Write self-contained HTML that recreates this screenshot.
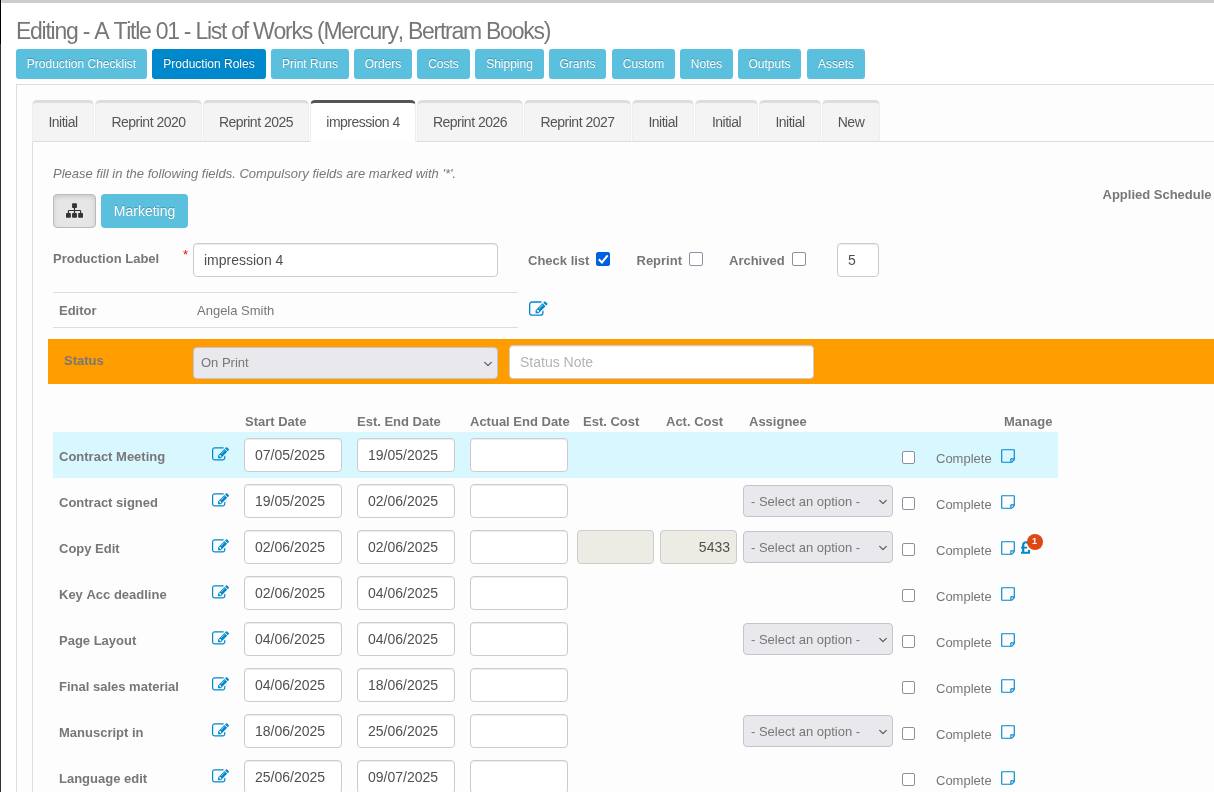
<!DOCTYPE html><html lang="en"><head><meta charset="utf-8"><title>Editing - A Title 01</title><style>*{box-sizing:border-box;margin:0;padding:0}
html,body{width:1214px;height:792px;overflow:hidden;background:#fff}
body{will-change:transform;font-kerning:none;position:relative;font-family:"Liberation Sans",Arial,sans-serif;font-size:13px;color:#777;line-height:1}
#topbar{position:absolute;left:0;top:0;width:1214px;height:3px;background:#ccc}
#leftbar{position:absolute;left:0;top:0;width:1px;height:792px;background:linear-gradient(#000,#000 44px,#2f333d 44px,#2f333d)}#leftbar2{position:absolute;left:1px;top:0;width:1px;height:3px;background:#dcdcdc}
#title{position:absolute;left:16px;top:17px;font-size:23px;font-weight:400;letter-spacing:-1.26px;color:#777;white-space:nowrap;line-height:28px}
.btn{position:absolute;top:49px;height:30px;background:#5bc0de;color:#fff;border-radius:3px;font-size:12px;line-height:30px;text-align:center;text-shadow:0 -1px 0 rgba(0,0,0,.25);white-space:nowrap;}
.btn.act{background:#0088cc}
#panel{position:absolute;left:16px;top:84px;width:1210px;height:720px;border:1px solid #ddd;background:#fdfdfd}
#tabcontent{position:absolute;left:32px;top:141px;width:1200px;height:700px;border:1px solid #ddd;background:#fdfdfd}
.tab{position:absolute;top:100px;height:42px;background:#f4f4f4;border:1px solid #eee;border-top:3px solid #ddd;border-bottom:1px solid #ddd;border-radius:5px 5px 0 0;font-size:14px;letter-spacing:-0.5px;color:#555;text-align:center;line-height:39px;white-space:nowrap}
.tab.act{background:#fff;border-top-color:#555;border-bottom-color:#fff;border-left-color:#eee;border-right-color:#eee}
#hint{position:absolute;left:53px;top:166px;font-style:italic;font-size:13px;color:#777;white-space:nowrap;line-height:15px}
#sitebtn{position:absolute;left:53px;top:194px;width:43px;height:34px;border:1px solid #bbb;border-radius:4px;background:#e6e6e6;box-shadow:inset 0 2px 4px rgba(0,0,0,.12)}
#sitebtn svg{position:absolute;left:12px;top:7px}
#mkt{position:absolute;left:101px;top:194px;width:87px;height:34px;background:#5bc0de;border-radius:4px;color:#fff;font-size:14px;line-height:34px;text-align:center;text-shadow:0 -1px 0 rgba(0,0,0,.25)}
.lbl{position:absolute;font-weight:700;font-size:13px;color:#777;white-space:nowrap;line-height:16px}
.val{position:absolute;font-size:13px;color:#777;white-space:nowrap;line-height:16px}
#applied{left:1102.5px;top:187px}
#req{position:absolute;left:183px;top:248px;color:#f00;font-size:13px}
.inp{position:absolute;height:34px;border:1px solid #ccc;border-radius:4px;background:#fff;font-size:14px;color:#505050;line-height:32px;white-space:nowrap;box-shadow:inset 0 1px 1px rgba(0,0,0,.075)}
.inp.ph{color:#b4b4b4}
.inp.d{top:6px;width:98px;padding-left:10px}
.inp.dis{background:#ecece5;box-shadow:none}
.cb{position:absolute;width:14px;height:14px;border:1px solid #8f8f9d;border-radius:2px;background:#fff}
.cb.s{width:13px;height:13px}
.cb.on{background:#0060df;border-color:#0060df}
.cb.on svg{position:absolute;left:-1px;top:-1px}
#edrow{position:absolute;left:53px;top:292px;width:465px;height:36px;border-top:1px solid #ddd;border-bottom:1px solid #ddd}
#status{position:absolute;left:48px;top:339px;width:1180px;height:45px;background:#ff9c00}
.sel{position:absolute;height:32px;border:1px solid #c4c4cc;border-radius:4px;background:#e9e9ed;color:#777;font-size:13px;line-height:32px;padding-left:7px;white-space:nowrap}
.sel .chev{position:absolute;right:3px;top:10px}
.th{top:414px}
.row{position:absolute;left:53px;width:1005px;height:46px}
.row.hl{background:#d9f7ff}
.badge{position:absolute;left:973.5px;top:10px;width:16px;height:16px;border-radius:8px;background:#dd4814;color:#fff;font-size:9px;font-weight:700;line-height:14px;text-align:center}
</style></head><body>
<div id="topbar"></div><div id="leftbar"></div><div id="leftbar2"></div>
<h2 id="title">Editing - A Title 01 - List of Works (Mercury, Bertram Books)</h2>
<a class="btn" style="left:16px;width:131px">Production Checklist</a>
<a class="btn act" style="left:152px;width:114px">Production Roles</a>
<a class="btn" style="left:271px;width:78px">Print Runs</a>
<a class="btn" style="left:354px;width:58px">Orders</a>
<a class="btn" style="left:417px;width:53px">Costs</a>
<a class="btn" style="left:475px;width:69px">Shipping</a>
<a class="btn" style="left:549px;width:57px">Grants</a>
<a class="btn" style="left:612px;width:63px">Custom</a>
<a class="btn" style="left:680px;width:53px">Notes</a>
<a class="btn" style="left:738px;width:63px">Outputs</a>
<a class="btn" style="left:807px;width:58px">Assets</a>
<div id="panel"></div>
<div id="tabcontent"></div>
<div class="tab" style="left:32px;width:62px">Initial</div>
<div class="tab" style="left:95px;width:107px">Reprint 2020</div>
<div class="tab" style="left:203px;width:106px">Reprint 2025</div>
<div class="tab act" style="left:310px;width:106px">impression 4</div>
<div class="tab" style="left:417px;width:106px">Reprint 2026</div>
<div class="tab" style="left:524px;width:107px">Reprint 2027</div>
<div class="tab" style="left:632px;width:62px">Initial</div>
<div class="tab" style="left:695px;width:63px">Initial</div>
<div class="tab" style="left:759px;width:62px">Initial</div>
<div class="tab" style="left:822px;width:58px">New</div>
<p id="hint">Please fill in the following fields. Compulsory fields are marked with '*'.</p>
<div id="sitebtn"><svg viewBox="0 0 1792 1792" width="17" height="17"><path fill="#333" d="M1792 1248v320q0 40-28 68t-68 28h-320q-40 0-68-28t-28-68v-320q0-40 28-68t68-28h96v-192h-512v192h96q40 0 68 28t28 68v320q0 40-28 68t-68 28h-320q-40 0-68-28t-28-68v-320q0-40 28-68t68-28h96v-192h-512v192h96q40 0 68 28t28 68v320q0 40-28 68t-68 28h-320q-40 0-68-28t-28-68v-320q0-40 28-68t68-28h96v-192q0-52 38-90t90-38h512v-192h-96q-40 0-68-28t-28-68v-320q0-40 28-68t68-28h320q40 0 68 28t28 68v320q0 40-28 68t-68 28h-96v192h512q52 0 90 38t38 90v192h96q40 0 68 28t28 68z"/></svg></div>
<a id="mkt">Marketing</a>
<div id="applied" class="lbl">Applied Schedule</div>
<div class="lbl" style="left:53px;top:251px">Production Label</div><span id="req">*</span>
<div class="inp" style="left:193px;top:243px;width:305px;padding-left:10px">impression 4</div>
<div class="lbl" style="left:528px;top:253px">Check list</div><div class="cb on" style="left:596px;top:252px"><svg viewBox="0 0 14 14" width="14" height="14"><path d="M2.800 7.200 L5.900 10.400 L11.700 3.400" fill="none" stroke="#fff" stroke-width="2"/></svg></div>
<div class="lbl" style="left:636.5px;top:253px">Reprint</div><div class="cb" style="left:689px;top:252px"></div>
<div class="lbl" style="left:729px;top:253px">Archived</div><div class="cb" style="left:792px;top:252px"></div>
<div class="inp" style="left:837px;top:243px;width:42px;padding-left:10px">5</div>
<div id="edrow"><span class="lbl" style="left:6px;top:10px">Editor</span><span class="val" style="left:144px;top:10px">Angela Smith</span></div>
<div style="position:absolute;left:529px;top:299.500px"><svg class="ic-edit" viewBox="0 0 1792 1792" width="18.500" height="18.500"><path fill="#0088cc" d="M888 1184l116-116-152-152-116 116v56h96v96h56zm440-720q-16-16-33 1l-350 350q-17 17-1 33t33-1l350-350q17-17 1-33zm80 594v190q0 119-84.500 203.500t-203.500 84.500h-832q-119 0-203.500-84.500t-84.500-203.500v-832q0-119 84.500-203.500t203.500-84.500h832q63 0 117 25 15 7 18 23 3 17-9 29l-49 49q-14 14-32 8-23-6-45-6h-832q-66 0-113 47t-47 113v832q0 66 47 113t113 47h832q66 0 113-47t47-113v-126q0-13 9-22l64-64q15-15 35-7t20 29zm-96-738l288 288-672 672h-288v-288zm444 132l-92 92-288-288 92-92q28-28 68-28t68 28l152 152q28 28 28 68t-28 68z"/></svg></div>
<div id="status"><span class="lbl" style="left:16px;top:14px">Status</span>
<div class="sel" style="left:145px;top:8px;width:305px;line-height:30px">On Print<svg class="chev" viewBox="0 0 12 12" width="12" height="12"><path d="M2.700 4.400 L6 7.600 L9.300 4.400" fill="none" stroke="#55555e" stroke-width="1.200" stroke-linecap="round" stroke-linejoin="round"/></svg></div>
<div class="inp ph" style="left:461px;top:6px;width:305px;padding-left:10px">Status Note</div></div>
<div class="lbl th" style="left:245px">Start Date</div>
<div class="lbl th" style="left:357px">Est. End Date</div>
<div class="lbl th" style="left:470px">Actual End Date</div>
<div class="lbl th" style="left:583px">Est. Cost</div>
<div class="lbl th" style="left:666px">Act. Cost</div>
<div class="lbl th" style="left:749px">Assignee</div>
<div class="lbl th" style="left:1004px">Manage</div>
<div class="row hl" style="top:432px">
<span class="lbl" style="left:6px;top:17px">Contract Meeting</span>
<span style="position:absolute;left:159px;top:14px"><svg class="ic-edit" viewBox="0 0 1792 1792" width="17" height="17"><path fill="#0088cc" d="M888 1184l116-116-152-152-116 116v56h96v96h56zm440-720q-16-16-33 1l-350 350q-17 17-1 33t33-1l350-350q17-17 1-33zm80 594v190q0 119-84.500 203.500t-203.500 84.500h-832q-119 0-203.500-84.500t-84.500-203.500v-832q0-119 84.500-203.500t203.500-84.500h832q63 0 117 25 15 7 18 23 3 17-9 29l-49 49q-14 14-32 8-23-6-45-6h-832q-66 0-113 47t-47 113v832q0 66 47 113t113 47h832q66 0 113-47t47-113v-126q0-13 9-22l64-64q15-15 35-7t20 29zm-96-738l288 288-672 672h-288v-288zm444 132l-92 92-288-288 92-92q28-28 68-28t68 28l152 152q28 28 28 68t-28 68z"/></svg></span>
<div class="inp d" style="left:191px">07/05/2025</div><div class="inp d" style="left:304px">19/05/2025</div><div class="inp d" style="left:417px"></div>
<div class="cb s" style="left:849px;top:19px"></div><span class="val" style="left:883px;top:19px">Complete</span>
<span style="position:absolute;left:947px;top:16px"><svg class="ic-note" viewBox="0 0 1792 1792" width="16" height="16"><path fill="#0088cc" d="M1528 1280h-248v248q29-10 41-22l185-185q12-12 22-41zm-280-128h288v-896h-1280v1280h896v-288q0-40 28-68t68-28zm416-928v1024q0 40-20 88t-48 76l-184 184q-28 28-76 48t-88 20h-1024q-40 0-68-28t-28-68v-1344q0-40 28-68t68-28h1344q40 0 68 28t28 68z"/></svg></span>
</div>
<div class="row" style="top:478px">
<span class="lbl" style="left:6px;top:17px">Contract signed</span>
<span style="position:absolute;left:159px;top:14px"><svg class="ic-edit" viewBox="0 0 1792 1792" width="17" height="17"><path fill="#0088cc" d="M888 1184l116-116-152-152-116 116v56h96v96h56zm440-720q-16-16-33 1l-350 350q-17 17-1 33t33-1l350-350q17-17 1-33zm80 594v190q0 119-84.500 203.500t-203.500 84.500h-832q-119 0-203.500-84.500t-84.500-203.500v-832q0-119 84.500-203.500t203.500-84.500h832q63 0 117 25 15 7 18 23 3 17-9 29l-49 49q-14 14-32 8-23-6-45-6h-832q-66 0-113 47t-47 113v832q0 66 47 113t113 47h832q66 0 113-47t47-113v-126q0-13 9-22l64-64q15-15 35-7t20 29zm-96-738l288 288-672 672h-288v-288zm444 132l-92 92-288-288 92-92q28-28 68-28t68 28l152 152q28 28 28 68t-28 68z"/></svg></span>
<div class="inp d" style="left:191px">19/05/2025</div><div class="inp d" style="left:304px">02/06/2025</div><div class="inp d" style="left:417px"></div>
<div class="sel" style="left:690px;top:7px;width:150px">- Select an option -<svg class="chev" viewBox="0 0 12 12" width="12" height="12"><path d="M2.700 4.400 L6 7.600 L9.300 4.400" fill="none" stroke="#55555e" stroke-width="1.200" stroke-linecap="round" stroke-linejoin="round"/></svg></div>
<div class="cb s" style="left:849px;top:19px"></div><span class="val" style="left:883px;top:19px">Complete</span>
<span style="position:absolute;left:947px;top:16px"><svg class="ic-note" viewBox="0 0 1792 1792" width="16" height="16"><path fill="#0088cc" d="M1528 1280h-248v248q29-10 41-22l185-185q12-12 22-41zm-280-128h288v-896h-1280v1280h896v-288q0-40 28-68t68-28zm416-928v1024q0 40-20 88t-48 76l-184 184q-28 28-76 48t-88 20h-1024q-40 0-68-28t-28-68v-1344q0-40 28-68t68-28h1344q40 0 68 28t28 68z"/></svg></span>
</div>
<div class="row" style="top:524px">
<span class="lbl" style="left:6px;top:17px">Copy Edit</span>
<span style="position:absolute;left:159px;top:14px"><svg class="ic-edit" viewBox="0 0 1792 1792" width="17" height="17"><path fill="#0088cc" d="M888 1184l116-116-152-152-116 116v56h96v96h56zm440-720q-16-16-33 1l-350 350q-17 17-1 33t33-1l350-350q17-17 1-33zm80 594v190q0 119-84.500 203.500t-203.500 84.500h-832q-119 0-203.500-84.500t-84.500-203.500v-832q0-119 84.500-203.500t203.500-84.500h832q63 0 117 25 15 7 18 23 3 17-9 29l-49 49q-14 14-32 8-23-6-45-6h-832q-66 0-113 47t-47 113v832q0 66 47 113t113 47h832q66 0 113-47t47-113v-126q0-13 9-22l64-64q15-15 35-7t20 29zm-96-738l288 288-672 672h-288v-288zm444 132l-92 92-288-288 92-92q28-28 68-28t68 28l152 152q28 28 28 68t-28 68z"/></svg></span>
<div class="inp d" style="left:191px">02/06/2025</div><div class="inp d" style="left:304px">02/06/2025</div><div class="inp d" style="left:417px"></div>
<div class="inp d dis" style="left:524px;width:77px"></div><div class="inp d dis" style="left:607px;width:77px;text-align:right;padding-right:6px">5433</div>
<div class="sel" style="left:690px;top:7px;width:150px">- Select an option -<svg class="chev" viewBox="0 0 12 12" width="12" height="12"><path d="M2.700 4.400 L6 7.600 L9.300 4.400" fill="none" stroke="#55555e" stroke-width="1.200" stroke-linecap="round" stroke-linejoin="round"/></svg></div>
<div class="cb s" style="left:849px;top:19px"></div><span class="val" style="left:883px;top:19px">Complete</span>
<span style="position:absolute;left:947px;top:16px"><svg class="ic-note" viewBox="0 0 1792 1792" width="16" height="16"><path fill="#0088cc" d="M1528 1280h-248v248q29-10 41-22l185-185q12-12 22-41zm-280-128h288v-896h-1280v1280h896v-288q0-40 28-68t68-28zm416-928v1024q0 40-20 88t-48 76l-184 184q-28 28-76 48t-88 20h-1024q-40 0-68-28t-28-68v-1344q0-40 28-68t68-28h1344q40 0 68 28t28 68z"/></svg></span>
<span style="position:absolute;left:968px;top:16px"><svg class="ic-gbp" viewBox="0 0 1024 1792" width="9" height="16"><path fill="#0088cc" d="M1020 1137v367q0 14-9 23t-23 9h-956q-14 0-23-9t-9-23v-150q0-13 9.500-22.500t22.500-9.500h97v-383h-95q-14 0-23-9.500t-9-22.500v-131q0-14 9-23t23-9h95v-223q0-171 123.500-282t314.500-111q185 0 335 125 9 8 10 20.500t-7 22.500l-103 127q-9 11-22 12-13 2-23-7-5-5-26-19t-69-32-93-18q-85 0-137 47t-52 123v215h305q13 0 22.500 9t9.500 23v131q0 13-9.500 22.500t-22.500 9.500h-305v379h414v-181q0-13 9-22.500t23-9.500h162q14 0 23 9.500t9 22.500z"/></svg></span><span class="badge">1</span>
</div>
<div class="row" style="top:570px">
<span class="lbl" style="left:6px;top:17px">Key Acc deadline</span>
<span style="position:absolute;left:159px;top:14px"><svg class="ic-edit" viewBox="0 0 1792 1792" width="17" height="17"><path fill="#0088cc" d="M888 1184l116-116-152-152-116 116v56h96v96h56zm440-720q-16-16-33 1l-350 350q-17 17-1 33t33-1l350-350q17-17 1-33zm80 594v190q0 119-84.500 203.500t-203.500 84.500h-832q-119 0-203.500-84.500t-84.500-203.500v-832q0-119 84.500-203.500t203.500-84.500h832q63 0 117 25 15 7 18 23 3 17-9 29l-49 49q-14 14-32 8-23-6-45-6h-832q-66 0-113 47t-47 113v832q0 66 47 113t113 47h832q66 0 113-47t47-113v-126q0-13 9-22l64-64q15-15 35-7t20 29zm-96-738l288 288-672 672h-288v-288zm444 132l-92 92-288-288 92-92q28-28 68-28t68 28l152 152q28 28 28 68t-28 68z"/></svg></span>
<div class="inp d" style="left:191px">02/06/2025</div><div class="inp d" style="left:304px">04/06/2025</div><div class="inp d" style="left:417px"></div>
<div class="cb s" style="left:849px;top:19px"></div><span class="val" style="left:883px;top:19px">Complete</span>
<span style="position:absolute;left:947px;top:16px"><svg class="ic-note" viewBox="0 0 1792 1792" width="16" height="16"><path fill="#0088cc" d="M1528 1280h-248v248q29-10 41-22l185-185q12-12 22-41zm-280-128h288v-896h-1280v1280h896v-288q0-40 28-68t68-28zm416-928v1024q0 40-20 88t-48 76l-184 184q-28 28-76 48t-88 20h-1024q-40 0-68-28t-28-68v-1344q0-40 28-68t68-28h1344q40 0 68 28t28 68z"/></svg></span>
</div>
<div class="row" style="top:616px">
<span class="lbl" style="left:6px;top:17px">Page Layout</span>
<span style="position:absolute;left:159px;top:14px"><svg class="ic-edit" viewBox="0 0 1792 1792" width="17" height="17"><path fill="#0088cc" d="M888 1184l116-116-152-152-116 116v56h96v96h56zm440-720q-16-16-33 1l-350 350q-17 17-1 33t33-1l350-350q17-17 1-33zm80 594v190q0 119-84.500 203.500t-203.500 84.500h-832q-119 0-203.500-84.500t-84.500-203.500v-832q0-119 84.500-203.500t203.500-84.500h832q63 0 117 25 15 7 18 23 3 17-9 29l-49 49q-14 14-32 8-23-6-45-6h-832q-66 0-113 47t-47 113v832q0 66 47 113t113 47h832q66 0 113-47t47-113v-126q0-13 9-22l64-64q15-15 35-7t20 29zm-96-738l288 288-672 672h-288v-288zm444 132l-92 92-288-288 92-92q28-28 68-28t68 28l152 152q28 28 28 68t-28 68z"/></svg></span>
<div class="inp d" style="left:191px">04/06/2025</div><div class="inp d" style="left:304px">04/06/2025</div><div class="inp d" style="left:417px"></div>
<div class="sel" style="left:690px;top:7px;width:150px">- Select an option -<svg class="chev" viewBox="0 0 12 12" width="12" height="12"><path d="M2.700 4.400 L6 7.600 L9.300 4.400" fill="none" stroke="#55555e" stroke-width="1.200" stroke-linecap="round" stroke-linejoin="round"/></svg></div>
<div class="cb s" style="left:849px;top:19px"></div><span class="val" style="left:883px;top:19px">Complete</span>
<span style="position:absolute;left:947px;top:16px"><svg class="ic-note" viewBox="0 0 1792 1792" width="16" height="16"><path fill="#0088cc" d="M1528 1280h-248v248q29-10 41-22l185-185q12-12 22-41zm-280-128h288v-896h-1280v1280h896v-288q0-40 28-68t68-28zm416-928v1024q0 40-20 88t-48 76l-184 184q-28 28-76 48t-88 20h-1024q-40 0-68-28t-28-68v-1344q0-40 28-68t68-28h1344q40 0 68 28t28 68z"/></svg></span>
</div>
<div class="row" style="top:662px">
<span class="lbl" style="left:6px;top:17px">Final sales material</span>
<span style="position:absolute;left:159px;top:14px"><svg class="ic-edit" viewBox="0 0 1792 1792" width="17" height="17"><path fill="#0088cc" d="M888 1184l116-116-152-152-116 116v56h96v96h56zm440-720q-16-16-33 1l-350 350q-17 17-1 33t33-1l350-350q17-17 1-33zm80 594v190q0 119-84.500 203.500t-203.500 84.500h-832q-119 0-203.500-84.500t-84.500-203.500v-832q0-119 84.500-203.500t203.500-84.500h832q63 0 117 25 15 7 18 23 3 17-9 29l-49 49q-14 14-32 8-23-6-45-6h-832q-66 0-113 47t-47 113v832q0 66 47 113t113 47h832q66 0 113-47t47-113v-126q0-13 9-22l64-64q15-15 35-7t20 29zm-96-738l288 288-672 672h-288v-288zm444 132l-92 92-288-288 92-92q28-28 68-28t68 28l152 152q28 28 28 68t-28 68z"/></svg></span>
<div class="inp d" style="left:191px">04/06/2025</div><div class="inp d" style="left:304px">18/06/2025</div><div class="inp d" style="left:417px"></div>
<div class="cb s" style="left:849px;top:19px"></div><span class="val" style="left:883px;top:19px">Complete</span>
<span style="position:absolute;left:947px;top:16px"><svg class="ic-note" viewBox="0 0 1792 1792" width="16" height="16"><path fill="#0088cc" d="M1528 1280h-248v248q29-10 41-22l185-185q12-12 22-41zm-280-128h288v-896h-1280v1280h896v-288q0-40 28-68t68-28zm416-928v1024q0 40-20 88t-48 76l-184 184q-28 28-76 48t-88 20h-1024q-40 0-68-28t-28-68v-1344q0-40 28-68t68-28h1344q40 0 68 28t28 68z"/></svg></span>
</div>
<div class="row" style="top:708px">
<span class="lbl" style="left:6px;top:17px">Manuscript in</span>
<span style="position:absolute;left:159px;top:14px"><svg class="ic-edit" viewBox="0 0 1792 1792" width="17" height="17"><path fill="#0088cc" d="M888 1184l116-116-152-152-116 116v56h96v96h56zm440-720q-16-16-33 1l-350 350q-17 17-1 33t33-1l350-350q17-17 1-33zm80 594v190q0 119-84.500 203.500t-203.500 84.500h-832q-119 0-203.500-84.500t-84.500-203.500v-832q0-119 84.500-203.500t203.500-84.500h832q63 0 117 25 15 7 18 23 3 17-9 29l-49 49q-14 14-32 8-23-6-45-6h-832q-66 0-113 47t-47 113v832q0 66 47 113t113 47h832q66 0 113-47t47-113v-126q0-13 9-22l64-64q15-15 35-7t20 29zm-96-738l288 288-672 672h-288v-288zm444 132l-92 92-288-288 92-92q28-28 68-28t68 28l152 152q28 28 28 68t-28 68z"/></svg></span>
<div class="inp d" style="left:191px">18/06/2025</div><div class="inp d" style="left:304px">25/06/2025</div><div class="inp d" style="left:417px"></div>
<div class="sel" style="left:690px;top:7px;width:150px">- Select an option -<svg class="chev" viewBox="0 0 12 12" width="12" height="12"><path d="M2.700 4.400 L6 7.600 L9.300 4.400" fill="none" stroke="#55555e" stroke-width="1.200" stroke-linecap="round" stroke-linejoin="round"/></svg></div>
<div class="cb s" style="left:849px;top:19px"></div><span class="val" style="left:883px;top:19px">Complete</span>
<span style="position:absolute;left:947px;top:16px"><svg class="ic-note" viewBox="0 0 1792 1792" width="16" height="16"><path fill="#0088cc" d="M1528 1280h-248v248q29-10 41-22l185-185q12-12 22-41zm-280-128h288v-896h-1280v1280h896v-288q0-40 28-68t68-28zm416-928v1024q0 40-20 88t-48 76l-184 184q-28 28-76 48t-88 20h-1024q-40 0-68-28t-28-68v-1344q0-40 28-68t68-28h1344q40 0 68 28t28 68z"/></svg></span>
</div>
<div class="row" style="top:754px">
<span class="lbl" style="left:6px;top:17px">Language edit</span>
<span style="position:absolute;left:159px;top:14px"><svg class="ic-edit" viewBox="0 0 1792 1792" width="17" height="17"><path fill="#0088cc" d="M888 1184l116-116-152-152-116 116v56h96v96h56zm440-720q-16-16-33 1l-350 350q-17 17-1 33t33-1l350-350q17-17 1-33zm80 594v190q0 119-84.500 203.500t-203.500 84.500h-832q-119 0-203.500-84.500t-84.500-203.500v-832q0-119 84.500-203.500t203.500-84.500h832q63 0 117 25 15 7 18 23 3 17-9 29l-49 49q-14 14-32 8-23-6-45-6h-832q-66 0-113 47t-47 113v832q0 66 47 113t113 47h832q66 0 113-47t47-113v-126q0-13 9-22l64-64q15-15 35-7t20 29zm-96-738l288 288-672 672h-288v-288zm444 132l-92 92-288-288 92-92q28-28 68-28t68 28l152 152q28 28 28 68t-28 68z"/></svg></span>
<div class="inp d" style="left:191px">25/06/2025</div><div class="inp d" style="left:304px">09/07/2025</div><div class="inp d" style="left:417px"></div>
<div class="cb s" style="left:849px;top:19px"></div><span class="val" style="left:883px;top:19px">Complete</span>
<span style="position:absolute;left:947px;top:16px"><svg class="ic-note" viewBox="0 0 1792 1792" width="16" height="16"><path fill="#0088cc" d="M1528 1280h-248v248q29-10 41-22l185-185q12-12 22-41zm-280-128h288v-896h-1280v1280h896v-288q0-40 28-68t68-28zm416-928v1024q0 40-20 88t-48 76l-184 184q-28 28-76 48t-88 20h-1024q-40 0-68-28t-28-68v-1344q0-40 28-68t68-28h1344q40 0 68 28t28 68z"/></svg></span>
</div>
</body></html>
